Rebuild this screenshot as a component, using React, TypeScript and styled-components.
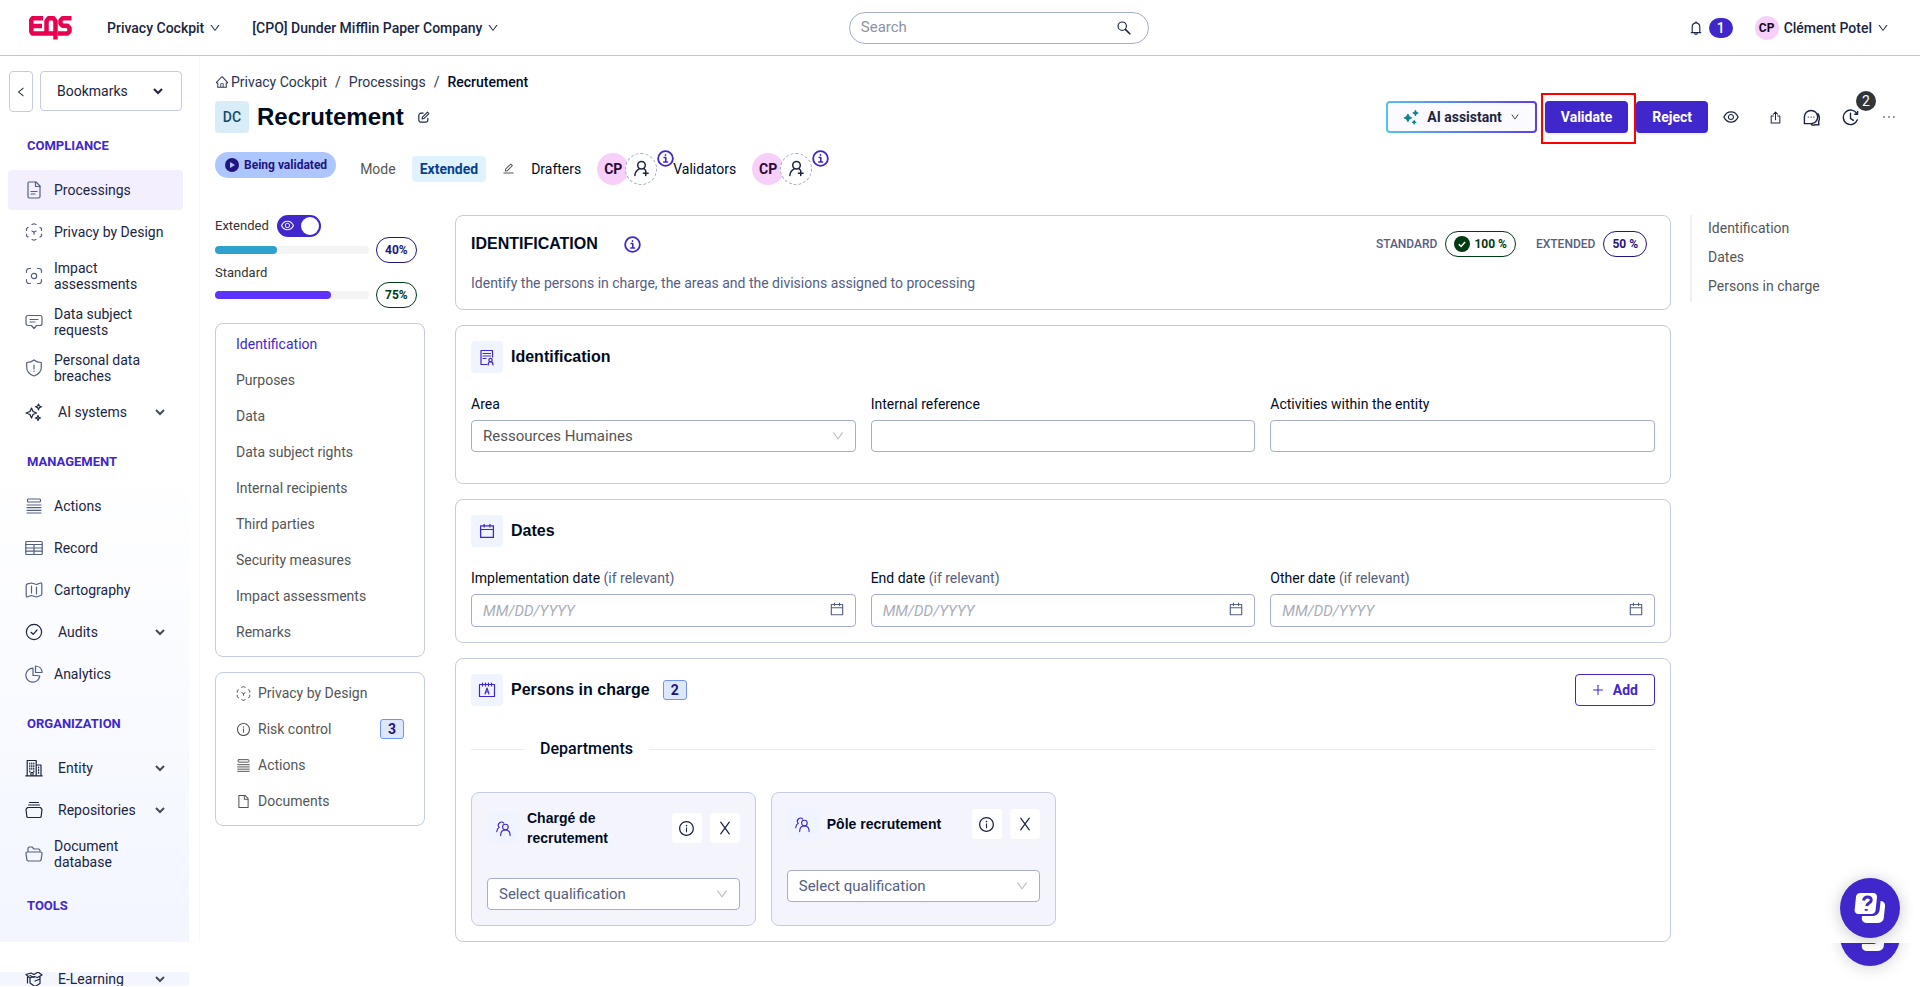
import React from "react";
import styled, { createGlobalStyle, css } from "styled-components";
import {
  AiOutlineBell,
  AiOutlineCalendar,
  AiOutlineDown,
  AiOutlineEdit,
  AiOutlineEllipsis,
  AiOutlineEye,
  AiOutlineFile,
  AiOutlineHome,
  AiOutlineInfoCircle,
  AiOutlineLeft,
  AiOutlinePlus,
} from "react-icons/ai";

const color = {
  primary: "#3f27cc",
  deep: "#22147e",
  ink: "#010b1f",
  navy: "#1b2540",
  slate: "#54607f",
  grey: "#555555",
  border: "#c5cbe0",
  field: "#a5afcd",
  tint: "#f0f4ff",
  green: "#013a13",
  pink: "#f6d0f9",
};
const headingFont = `"Liberation Sans", Arial, sans-serif`;

const GlobalStyle = createGlobalStyle`
  *, *::before, *::after { box-sizing: border-box; }
  body {
    margin: 0;
    background: #ffffff;
    color: ${color.ink};
    font: 400 14px/20px Roboto, "Liberation Sans", sans-serif;
  }
  h1, h2, h3, p, ul, ol { margin: 0; padding: 0; }
  ul, ol { list-style: none; }
  a { color: inherit; text-decoration: none; }
  button, input, select { font: inherit; color: inherit; margin: 0; }
  button { cursor: pointer; }
  svg { display: block; flex: none; }
`;

/* ---------- icons ---------- */

const Stroke = styled.svg.attrs({ viewBox: "0 0 18 18", "aria-hidden": true })<{ $size?: number }>`
  width: ${(p) => p.$size ?? 18}px;
  height: ${(p) => p.$size ?? 18}px;
  fill: none;
  stroke: currentColor;
  stroke-width: 1.2;
  stroke-linecap: round;
  stroke-linejoin: round;
`;

type IconProps = { $size?: number };

const FileIcon = (p: IconProps) => (
  <Stroke {...p}>
    <path d="M4 1h7l4 4v10.500a1.500 1.500 0 0 1-1.500 1.500h-9A1.500 1.500 0 0 1 3 15.500V2.200A1.200 1.200 0 0 1 4 1z" />
    <path d="M10.500 1v4.500H15M6 10.500h6M6 13h4" />
  </Stroke>
);
const DesignIcon = (p: IconProps) => (
  <Stroke {...p}>
    <path d="M7 1.500 9 .8l2 .7M3 4.500 1.500 5.500v2M15 4.500l1.500 1v2M1.500 11v2L3 14M16.500 11v2L15 14M7 16.500l2 .7 2-.7M7 8l2 1.200L11 8M9 9.200v2" />
  </Stroke>
);
const ScanIcon = (p: IconProps) => (
  <Stroke {...p}>
    <path d="M1.500 5.500V4A2.500 2.500 0 0 1 4 1.500h1.500M12.500 1.500H14A2.500 2.500 0 0 1 16.500 4v1.500M16.500 12.500V14a2.500 2.500 0 0 1-2.500 2.500h-1.500M5.500 16.500H4A2.500 2.500 0 0 1 1.500 14v-1.500" />
    <circle cx="9" cy="9" r="2.700" />
  </Stroke>
);
const RequestIcon = (p: IconProps) => (
  <Stroke {...p}>
    <path d="M3 2.500h12c1 0 2 .8 2 2v6c0 1.200-.8 2-2 2h-3.500L9 15.500l-2.500-3H3c-1.200 0-2-.8-2-2v-6c0-1.200 1-2 2-2zM5 6.500h8M5 9h5" />
  </Stroke>
);
const ShieldIcon = (p: IconProps) => (
  <Stroke {...p}>
    <path d="M9 1c2 1.800 4.500 2.500 7.300 2.500V8.500c0 4-3 7-7.300 8.500-4.300-1.500-7.300-4.500-7.300-8.500V3.500C4.500 3.500 7 2.800 9 1zM9 6v4M9 12v.3" />
  </Stroke>
);
const SparkIcon = (p: IconProps) => (
  <Stroke {...p}>
    <path d="M6.500 5 8 8.500l3.500 1.500L8 11.500 6.500 15 5 11.500 1 10l4-1.500zM13.500 1l.8 2 2.200.8-2.200.8-.8 2.200-.8-2.200-2.200-.8 2.200-.8zM13 12.500l.7 1.800 1.800.7-1.800.7L13 17.500l-.7-1.800-1.800-.7 1.800-.7z" />
  </Stroke>
);
const SparkFillIcon = (p: IconProps) => (
  <Stroke {...p}>
    <path
      fill="currentColor"
      d="M5.500 6 7 8.700 9.800 10 7 11.300 5.500 14 4 11.300 1.200 10 4 8.700zM14 1.800l.9 1.800 1.800.9-1.800.9L14 7.200l-.9-1.800-1.800-.9 1.800-.9zM12.500 13l.6 1.400 1.400.6-1.400.6-.6 1.400-.6-1.400-1.400-.6 1.400-.6z"
    />
  </Stroke>
);
const StackIcon = (p: IconProps) => (
  <Stroke {...p}>
    <rect x="2.500" y="2" width="13" height="3" rx="1" />
    <path d="M2 8h14M2 10.700h14M2 13.400h14M2 16h14" />
  </Stroke>
);
const TableIcon = (p: IconProps) => (
  <Stroke {...p}>
    <rect x=".8" y="2.500" width="16.400" height="13" rx="1" />
    <path d="M1 5.500h16M1 9h16M1 12.200h16M9 5.500v10" />
  </Stroke>
);
const MapIcon = (p: IconProps) => (
  <Stroke {...p}>
    <path d="M1.200 4.500c0-.8.5-1.300 1.300-1.600L6.500 2 11.500 3.500l4-1.500c.8-.2 1.300.2 1.300 1v10c0 .7-.4 1.200-1 1.500l-4.300 1.500-5-1.500-4 1.300c-.8.2-1.300-.2-1.300-1zM6.500 5v7M11.500 6v7" />
  </Stroke>
);
const CheckIcon = (p: IconProps) => (
  <Stroke {...p}>
    <circle cx="9" cy="9" r="7.600" />
    <path d="m6 9.300 2.200 2L12 7" />
  </Stroke>
);
const PieIcon = (p: IconProps) => (
  <Stroke {...p}>
    <path d="M8 3.200A7 7 0 1 0 14.800 11l-3.300-.5H8zM10.500 1v6.500H17C17 4 14.500 1.200 10.500 1z" />
  </Stroke>
);
const BuildingIcon = (p: IconProps) => (
  <Stroke {...p}>
    <path d="M.8 16.800h16.400M2.200 16.800V1.500h9v15.300M11.200 6H16v10.800M6 16.500v-3h2v3" />
    <path strokeDasharray="1 1.600" d="M4.800 4v9M6.800 4v7M8.800 4v9M13.600 8v7" />
  </Stroke>
);
const RepoIcon = (p: IconProps) => (
  <Stroke {...p}>
    <path d="M4.500 1.500h9M3.500 4h11M2.500 6.500h13L17 8.300l-.8 7c-.1.700-.6 1.200-1.400 1.200H3.200c-.8 0-1.300-.5-1.400-1.200l-.8-7z" />
  </Stroke>
);
const FolderIcon = (p: IconProps) => (
  <Stroke {...p}>
    <path d="M3 7V3.500C3 2.500 3.500 2 4.500 2H7l2 2h4.500c1 0 1.500.5 1.500 1.500V7M2.500 7h13c1 0 1.700.6 1.500 1.600l-.8 5.800c-.1 1-.8 1.600-1.700 1.600h-11c-.9 0-1.600-.6-1.700-1.600L1 8.600C.8 7.600 1.500 7 2.500 7z" />
  </Stroke>
);
const LearnIcon = (p: IconProps) => (
  <Stroke {...p}>
    <path d="M1 4.500 6 3l3 1.500L13 2l4 3-4.500 2.500L9 6.500 5 8zM2.500 7v6M5 8v5l5 3.500 5-3V6.500M10 11l5-2M5 5.500l4 2" />
  </Stroke>
);
const IdentityIcon = (p: IconProps) => (
  <Stroke {...p}>
    <path d="M9 16.500H3v-14h11.500V9M5 5.500h7.500M5 8h7.500M5 10.500h3" />
    <circle cx="12.500" cy="12" r="1.700" />
    <path d="M10.200 17c0-2 .8-3.300 2.300-3.300s2.500 1.300 2.500 3.300" />
  </Stroke>
);
const BadgeIcon = (p: IconProps) => (
  <Stroke {...p}>
    <path d="M1.500 3.500h15v12h-15zM4.500 2v3M7.500 2v3M10.500 2v3M13.500 2v3M7 13l2-6 2 6M7.700 11h2.600" />
  </Stroke>
);
const PeopleIcon = (p: IconProps) => (
  <Stroke {...p}>
    <circle cx="11" cy="7.500" r="3" />
    <path d="M6 16.500c0-3.500 2-6 5-6s5 2.500 5 6M4.500 7.800a2.800 2.800 0 1 1 4.800-4.500M1.800 12.500c.2-2.300 1-3.800 2.700-4.700" />
  </Stroke>
);
const AddUserIcon = (p: IconProps) => (
  <Stroke {...p}>
    <g strokeWidth="1.600">
      <circle cx="9" cy="5.500" r="4" />
      <path d="M2 16.500c0-3 1.500-5.500 4.500-7.200M11.500 9l1.500 1.500M13.500 11.500v5M11 14h5" />
    </g>
  </Stroke>
);
const InfoIcon = (p: IconProps) => (
  <Stroke {...p}>
    <circle cx="9" cy="9" r="7.800" strokeWidth="1.900" />
    <path d="M7.500 8h1.800v4.500M7.200 12.700h4M9 5.200v.3" strokeWidth="1.700" />
  </Stroke>
);
const SearchIcon = (p: IconProps) => (
  <Stroke {...p}>
    <circle cx="7" cy="7" r="4.700" strokeWidth="1.300" />
    <path d="m10.500 10.500 5 5" strokeWidth="1.800" />
  </Stroke>
);
const PenIcon = (p: IconProps) => (
  <Stroke {...p}>
    <path d="M8.500 3H5.500a3 3 0 0 0-3 3v6.500a3 3 0 0 0 3 3H12a3 3 0 0 0 3-3V10" strokeWidth="1.600" />
    <path d="m7 11 .5-2.500 7-7 2 2-7 7z" strokeWidth="1.400" />
  </Stroke>
);
const ShareIcon = (p: IconProps) => (
  <Stroke {...p}>
    <path d="M6 7H3v9.500h12V7h-3M9 12V1.500M6 4.500l3-3 3 3" strokeWidth="1.400" />
  </Stroke>
);
const ChatIcon = (p: IconProps) => (
  <Stroke {...p}>
    <path d="M1.500 15.500V8.500a7 7 0 1 1 7 7zM15.800 5c2 3 1.600 6.500.7 8.500l.3 3.300-3.300-.3c-1.500.7-3 .7-4.500.2" strokeWidth="1.500" />
    <path d="M5.500 8.500h.1M8.500 8.500h.1M11.500 8.500h.1" strokeWidth="1.300" />
  </Stroke>
);
const ClockIcon = (p: IconProps) => (
  <Stroke {...p}>
    <path d="M15.800 5A7.700 7.700 0 1 0 16.300 11.500M16.500 2.500V5.500h-3M9 4.500V10l3 2" strokeWidth="1.500" />
  </Stroke>
);
const CrossIcon = (p: IconProps) => (
  <Stroke {...p}>
    <path d="m3.500 1.500 11 15M14.500 1.500l-11 15" strokeWidth="1.600" />
  </Stroke>
);
const PlayBadge = () => (
  <svg width="14" height="14" viewBox="0 0 14 14" aria-hidden="true">
    <circle cx="7" cy="7" r="7" fill={color.deep} />
    <path d="M5 4l5 3-5 3z" fill="#adc6ff" />
  </svg>
);
const DoneBadge = () => (
  <svg width="16" height="16" viewBox="0 0 16 16" aria-hidden="true">
    <circle cx="8" cy="8" r="8" fill={color.green} />
    <path d="m4.800 8.300 2.300 2.200 4-4.500" fill="none" stroke="#fff" strokeWidth="1.500" />
  </svg>
);
const Chevron = () => (
  <svg width="12" height="12" viewBox="0 0 12 12" aria-hidden="true">
    <path d="M2 4l4 4 4-4" fill="none" stroke="currentColor" strokeWidth="2" />
  </svg>
);
const Logo = () => (
  <svg width="43" height="24" viewBox="0 0 43 24" role="img" aria-label="EQS">
    <g fill="none" stroke="#ea0050" strokeWidth="4.500" strokeLinejoin="round">
      <polyline points="14,2.300 3.500,2.300 2.300,4 2.300,15.500 3.500,17.500 27,17.500" />
      <polyline points="2.300,10 13,10" />
      <polyline points="17.500,18 17.500,5 19.500,2.300 24.500,2.300 26.500,5 26.500,23.500" />
      <polyline points="42.500,2.300 33.500,2.300 31.500,4.500 31.500,7.500 33.500,9.800 38.500,9.800 40.500,12 40.500,15.500 38.500,17.500 29,17.500" />
    </g>
  </svg>
);
const HelpGlyph = () => (
  <svg width="60" height="60" viewBox="0 0 60 60" aria-hidden="true">
    <rect x="22" y="23" width="22" height="22" rx="5" fill="#fff" transform="skewX(-6) translate(4 0)" />
    <rect x="14" y="13" width="26" height="25" rx="6" fill={color.primary} transform="skewX(-6) translate(3 0)" />
    <rect x="15" y="15" width="21" height="21" rx="4" fill="#fff" transform="skewX(-6) translate(3 0)" />
    <path
      d="M23.500 22.500c.5-2.500 2-3.500 4-3.500 2.500 0 4 1.400 3.700 3.500-.4 2.600-4 2.500-4.500 5.500M26.200 31v1.800"
      fill="none"
      stroke={color.primary}
      strokeWidth="3"
    />
  </svg>
);

/* ---------- page frame ---------- */

const Page = styled.div`
  display: flex;
  flex-direction: column;
  min-height: 100vh;
`;
const TopBar = styled.header`
  display: grid;
  grid-template-columns: 10fr 300px 9fr;
  column-gap: 24px;
  align-items: center;
  height: 56px;
  padding: 0 31px 0 29px;
  border-bottom: 1px solid #bcc6d6;
  color: ${color.navy};
  font-weight: 500;
`;
const TopGroup = styled.div<{ $end?: boolean }>`
  display: flex;
  align-items: center;
  gap: ${(p) => (p.$end ? 22 : 31)}px;
  justify-content: ${(p) => (p.$end ? "flex-end" : "flex-start")};
`;
const HomeLink = styled.a`
  margin-right: 4px;
`;
const PlainButton = styled.button`
  display: flex;
  align-items: center;
  gap: 5px;
  padding: 0;
  border: 0;
  background: none;
  white-space: nowrap;
`;
const SearchBox = styled.label`
  display: flex;
  align-items: center;
  height: 32px;
  padding: 0 16px 0 11px;
  border: 1px solid ${color.field};
  border-radius: 16px;
`;
const SearchInput = styled.input`
  flex: 1;
  min-width: 0;
  padding: 0 0 2px;
  border: 0;
  outline: 0;
  background: none;
  font-size: 15px;
  font-weight: 400;
  &::placeholder { color: #8d93a3; opacity: 1; }
`;
const Bubble = styled.span`
  padding: 0 8px;
  border-radius: 10px;
  background: ${color.primary};
  color: #fff;
`;
const SmallAvatar = styled.span`
  display: grid;
  place-items: center;
  width: 24px;
  height: 24px;
  border-radius: 50%;
  background: ${color.pink};
  color: #17071f;
  font-size: 12px;
  font-weight: 700;
`;

const Body = styled.div`
  display: flex;
  align-items: stretch;
`;

/* ---------- sidebar ---------- */

const Sidebar = styled.aside`
  flex: none;
  width: 200px;
  padding: 15px 10px 0 0;
  border-right: 1px solid #f6f8fe;
  background: linear-gradient(#ffffff 45%, #f3f6ff 98%) content-box no-repeat;
  color: ${color.navy};
`;
const SideTools = styled.div`
  display: flex;
  align-items: flex-start;
  gap: 7px;
  margin-bottom: 4px;
  padding: 0 7px 0 9px;
`;
const CollapseButton = styled.button`
  display: grid;
  place-items: center;
  width: 24px;
  height: 41px;
  padding: 0;
  border: 1px solid ${color.border};
  border-radius: 4px;
  background: #fff;
`;
const BookmarksButton = styled.button`
  display: flex;
  flex: 1;
  align-items: center;
  justify-content: space-between;
  height: 40px;
  padding: 0 17px 0 16px;
  border: 1px solid ${color.border};
  border-radius: 4px;
  background: #fff;
`;
const SideHeading = styled.h2`
  height: 54px;
  padding: 20px 0 0 27px;
  color: ${color.primary};
  font-size: 13px;
  font-weight: 700;
  line-height: 20px;
`;
const SideList = styled.ul`
  display: flex;
  flex-direction: column;
  gap: 2px;
  padding: 0 6px 0 8px;
`;
const sideItem = css`
  display: flex;
  align-items: center;
  width: 100%;
  min-height: 40px;
  padding: 6px 12px 6px 17px;
  border: 0;
  border-radius: 4px;
  background: none;
  text-align: left;
  line-height: 16px;
`;
const SideLink = styled.a<{ $active?: boolean }>`
  ${sideItem}
  gap: 11px;
  background: ${(p) => (p.$active ? "#f3efff" : "none")};
  > svg { color: ${color.slate}; }
`;
const SideToggle = styled.button`
  ${sideItem}
  gap: 15px;
  padding-right: 17px;
  > span { flex: 1; }
  > svg:last-child { color: #444b5c; }
`;
const FootStrip = styled.div`
  display: flex;
  align-items: center;
  width: 189px;
  height: 14px;
  margin-top: 30px;
  padding: 0 6px 0 8px;
  overflow: hidden;
  background: #f3f6ff;
  color: ${color.navy};
`;

/* ---------- page heading ---------- */

const Main = styled.main`
  flex: 1;
  min-width: 0;
  padding: 16px 0 0 15px;
`;
const Crumbs = styled.ol`
  display: flex;
  gap: 8px;
  color: #2a3350;
  li { display: flex; align-items: center; gap: 2px; }
  li:last-child { color: ${color.ink}; font-weight: 500; }
`;
const TitleRow = styled.div`
  display: flex;
  align-items: center;
  justify-content: space-between;
  height: 32px;
  margin-top: 9px;
  padding-right: 17px;
`;
const TitleGroup = styled.div`
  display: flex;
  align-items: center;
  gap: 8px;
`;
const CodeTag = styled.span`
  display: grid;
  place-items: center;
  width: 34px;
  height: 32px;
  border-radius: 4px;
  background: #d8edf7;
  color: #164c66;
  font-weight: 500;
`;
const Title = styled.h1`
  font: 700 24px/32px ${headingFont};
`;
const IconButton = styled.button<{ $width: number }>`
  position: relative;
  display: grid;
  place-items: center;
  width: ${(p) => p.$width}px;
  height: 32px;
  padding: 0;
  border: 0;
  background: none;
  color: ${color.navy};
`;
const Actions = styled.div`
  display: flex;
  align-items: center;
  gap: 8px;
`;
const AssistantButton = styled.button`
  display: flex;
  align-items: center;
  gap: 8px;
  height: 32px;
  padding: 0 15px;
  border: 2px solid transparent;
  border-radius: 4px;
  background:
    linear-gradient(#fbfbff, #fbfbff) padding-box,
    linear-gradient(90deg, #58c3e4, #5b3bf7) border-box;
  color: ${color.navy};
  font-weight: 700;
  > svg:first-child { color: #0f7f95; }
`;
const SolidButton = styled.button`
  height: 32px;
  padding: 0 16px;
  border: 0;
  border-radius: 4px;
  background: ${color.primary};
  box-shadow: 0 2px 0 rgba(40, 30, 120, 0.06);
  color: #fff;
  font-weight: 700;
  line-height: 30px;
`;
const Highlight = styled.span`
  position: relative;
  &::after {
    content: "";
    position: absolute;
    inset: -8px -8px -11px -4px;
    border: 2px solid #ff0000;
    pointer-events: none;
  }
`;
const Tools = styled.div`
  display: flex;
  align-items: center;
  margin-left: -7px;
`;
const CountDot = styled.span`
  position: absolute;
  top: -10px;
  left: 31px;
  width: 20px;
  height: 20px;
  border-radius: 50%;
  background: #333638;
  color: #fff;
`;

const MetaRow = styled.div`
  display: flex;
  align-items: flex-start;
  gap: 24px;
  margin-top: 19px;
`;
const StatusTag = styled.span`
  display: flex;
  align-items: center;
  gap: 5px;
  height: 26px;
  padding: 0 9px 0 10px;
  border-radius: 13px;
  background: #adc6ff;
  color: ${color.deep};
  font-size: 12px;
  font-weight: 700;
`;
const MetaGroup = styled.div`
  display: flex;
  align-items: center;
  gap: 16px;
  height: 33px;
`;
const Muted = styled.span`
  color: ${color.grey};
`;
const ModeTag = styled.span`
  height: 26px;
  padding: 0 8px;
  border-radius: 4px;
  background: #dff3ff;
  color: #0b3f92;
  font-weight: 700;
  line-height: 26px;
`;
const People = styled.div`
  position: relative;
  display: flex;
`;
const Avatar = styled.span`
  display: grid;
  place-items: center;
  width: 32px;
  height: 32px;
  border-radius: 50%;
  background: ${color.pink};
  color: #2b0a35;
  font-weight: 700;
`;
const AddPerson = styled.button`
  display: grid;
  place-items: center;
  width: 32px;
  height: 32px;
  margin-left: -4px;
  padding: 0;
  border: 1px dashed ${color.field};
  border-radius: 50%;
  background: #fff;
  color: ${color.navy};
`;
const CornerInfo = styled.span`
  position: absolute;
  top: -3px;
  right: -17px;
  color: ${color.primary};
`;

/* ---------- columns ---------- */

const Columns = styled.div`
  display: grid;
  grid-template-columns: 210px minmax(0, 1fr) 230px;
  align-items: start;
  margin-top: 30px;
`;
const LeftColumn = styled.div`
  color: #333;
`;
const ToggleLabel = styled.label`
  display: flex;
  align-items: center;
  gap: 8px;
  height: 22px;
  font-size: 13px;
`;
const Switch = styled.span`
  position: relative;
  display: flex;
  align-items: center;
  width: 44px;
  height: 22px;
  padding: 0 0 2px 3px;
  border-radius: 11px;
  background: ${color.primary};
  color: #fff;
  &::after {
    content: "";
    position: absolute;
    top: 2px;
    right: 2px;
    width: 18px;
    height: 18px;
    border-radius: 50%;
    background: #fff;
  }
  input { position: absolute; inset: 0; width: 100%; height: 100%; margin: 0; opacity: 0; }
`;
const Progress = styled.div`
  display: flex;
  align-items: center;
  gap: 7px;
  height: 26px;
`;
const Track = styled.div`
  width: 154px;
  height: 8px;
  border-radius: 4px;
  background: #f4f4f4;
`;
const Fill = styled.div<{ $value: number; $color: string }>`
  width: ${(p) => p.$value}%;
  height: 8px;
  border-radius: 4px;
  background: ${(p) => p.$color};
`;
const ProgressLabel = styled.div`
  height: 19px;
  font-size: 13px;
  line-height: 19px;
`;
const Pill = styled.span<{ $green?: boolean }>`
  display: flex;
  align-items: center;
  gap: 4px;
  height: 26px;
  padding: 0 8px;
  border: 1px solid ${(p) => (p.$green ? color.green : color.deep)};
  border-radius: 13px;
  color: ${(p) => (p.$green ? color.green : color.deep)};
  font-size: 12px;
  font-weight: 700;
`;
const NavCard = styled.nav`
  margin-top: 15px;
  padding: 2px 20px 6px;
  border: 1px solid ${color.border};
  border-radius: 8px;
  color: ${color.grey};
`;
const NavLink = styled.a<{ $active?: boolean }>`
  display: flex;
  align-items: center;
  gap: 7px;
  height: 36px;
  color: ${(p) => (p.$active ? color.primary : color.grey)};
`;
const CountTag = styled.span`
  width: 24px;
  height: 20px;
  margin-left: 5px;
  border: 1px solid #6f93f5;
  border-radius: 3px;
  background: #dde8fd;
  color: ${color.deep};
  font-weight: 700;
  line-height: 18px;
  text-align: center;
`;
const PushRight = styled.span`
  flex: 1;
`;

const Content = styled.div`
  display: flex;
  flex-direction: column;
  gap: 15px;
  margin: 0 19px 0 30px;
`;
const Card = styled.section<{ $roomy?: boolean }>`
  padding: 15px 15px ${(p) => (p.$roomy ? 31 : 15)}px;
  border: 1px solid ${color.border};
  border-radius: 8px;
`;
const CardHead = styled.div`
  display: flex;
  align-items: center;
  gap: 8px;
  height: 32px;
`;
const IntroHead = styled(CardHead)`
  height: 26px;
  padding-right: 8px;
`;
const CardTitle = styled.h2`
  font: 700 16px/24px ${headingFont};
`;
const InfoMark = styled.span`
  margin-left: 18px;
  color: ${color.primary};
`;
const Level = styled.span`
  margin-left: 12px;
  color: ${color.slate};
  font-size: 12px;
  font-weight: 500;
`;
const Intro = styled.p`
  margin: 16px 0 1px;
  color: ${color.slate};
`;
const IconTile = styled.span`
  display: grid;
  place-items: center;
  flex: none;
  width: 32px;
  height: 32px;
  border-radius: 4px;
  background: ${color.tint};
  color: ${color.primary};
`;
const Fields = styled.div`
  display: grid;
  grid-template-columns: repeat(3, minmax(0, 1fr));
  gap: 15px;
  margin-top: 21px;
`;
const FieldLabel = styled.label`
  display: block;
  margin-bottom: 6px;
  span { color: ${color.slate}; }
`;
const FieldBox = styled.div<{ $muted?: boolean }>`
  position: relative;
  > svg {
    position: absolute;
    top: ${(p) => (p.$muted ? 9 : 7)}px;
    right: 11px;
    color: ${(p) => (p.$muted ? "#b9bcc4" : color.slate)};
    pointer-events: none;
  }
`;
const control = css`
  display: block;
  width: 100%;
  height: 32px;
  padding: 0 11px;
  border: 1px solid ${color.field};
  border-radius: 4px;
  outline: 0;
  background: #fff;
`;
const TextInput = styled.input`
  ${control}
`;
const DateInput = styled.input`
  ${control}
  height: 33px;
  font-size: 15px;
  &::placeholder { color: #a9adb9; font-style: italic; opacity: 1; }
`;
const SelectInput = styled.select<{ $placeholder?: boolean }>`
  ${control}
  appearance: none;
  color: ${(p) => (p.$placeholder ? color.slate : color.grey)};
  font-size: 15px;
`;
const AddButton = styled.button`
  display: flex;
  align-items: center;
  gap: 8px;
  height: 32px;
  padding: 0 16px 0 15px;
  border: 1px solid ${color.primary};
  border-radius: 4px;
  background: #fff;
  color: ${color.primary};
  font-weight: 700;
`;
const Divider = styled.h3`
  display: flex;
  align-items: center;
  gap: 16px;
  margin: 31px 0;
  font-size: 16px;
  font-weight: 500;
  line-height: 24px;
  &::before, &::after { content: ""; height: 1px; background: #ececee; }
  &::before { width: 53px; }
  &::after { flex: 1; }
`;
const Departments = styled.div`
  display: grid;
  grid-template-columns: repeat(4, minmax(0, 1fr));
  gap: 15px;
`;
const DeptCard = styled.article`
  padding: 15px;
  border: 1px solid ${color.border};
  border-radius: 8px;
  background: #f4f5fc;
`;
const DeptHead = styled.div`
  display: flex;
  align-items: center;
  gap: 8px;
  margin-bottom: 30px;
`;
const DeptTitle = styled.h4`
  flex: 1;
  margin: 0;
  font: 700 14px/20px ${headingFont};
`;
const TileButton = styled.button`
  display: grid;
  place-items: center;
  flex: none;
  width: 30px;
  height: 30px;
  padding: 0;
  border: 0;
  border-radius: 4px;
  background: #fff;
  color: ${color.navy};
`;
const Anchors = styled.nav`
  display: flex;
  flex-direction: column;
  padding-left: 16px;
  border-left: 2px solid #f0f0f0;
  color: ${color.grey};
  a { height: 29px; line-height: 27px; }
`;

/* ---------- help bubble ---------- */

const HelpButton = styled.button`
  position: fixed;
  right: 20px;
  bottom: 49px;
  width: 60px;
  height: 60px;
  padding: 0;
  border: 0;
  border-radius: 50%;
  background: ${color.primary};
  box-shadow: 0 2px 16px rgba(0, 0, 0, 0.22);
`;
const HelpTail = styled.div`
  position: fixed;
  right: 0;
  bottom: 0;
  display: flex;
  align-items: flex-end;
  width: 96px;
  height: 44px;
  padding: 0 20px 21px 16px;
  overflow: hidden;
`;
const HelpDisc = styled.span`
  width: 60px;
  height: 60px;
  border-radius: 50%;
  background: ${color.primary};
  box-shadow: 0 2px 16px rgba(0, 0, 0, 0.16);
`;

/* ---------- data ---------- */

type SideEntry = { label: string; icon: React.FC<IconProps>; toggle?: boolean; active?: boolean };
const sections: { title: string; items: SideEntry[] }[] = [
  {
    title: "COMPLIANCE",
    items: [
      { label: "Processings", icon: FileIcon, active: true },
      { label: "Privacy by Design", icon: DesignIcon },
      { label: "Impact assessments", icon: ScanIcon },
      { label: "Data subject requests", icon: RequestIcon },
      { label: "Personal data breaches", icon: ShieldIcon },
      { label: "AI systems", icon: SparkIcon, toggle: true },
    ],
  },
  {
    title: "MANAGEMENT",
    items: [
      { label: "Actions", icon: StackIcon },
      { label: "Record", icon: TableIcon },
      { label: "Cartography", icon: MapIcon },
      { label: "Audits", icon: CheckIcon, toggle: true },
      { label: "Analytics", icon: PieIcon },
    ],
  },
  {
    title: "ORGANIZATION",
    items: [
      { label: "Entity", icon: BuildingIcon, toggle: true },
      { label: "Repositories", icon: RepoIcon, toggle: true },
      { label: "Document database", icon: FolderIcon },
    ],
  },
  { title: "TOOLS", items: [] },
];
const steps = [
  "Identification",
  "Purposes",
  "Data",
  "Data subject rights",
  "Internal recipients",
  "Third parties",
  "Security measures",
  "Impact assessments",
  "Remarks",
];

const SideRow = ({ label, icon: Icon, toggle, active }: SideEntry) =>
  toggle ? (
    <SideToggle type="button">
      <Icon />
      <span>{label}</span>
      <Chevron />
    </SideToggle>
  ) : (
    <SideLink href="#" $active={active}>
      <Icon />
      {label}
    </SideLink>
  );

const Assigned = ({ label }: { label: string }) => (
  <>
    <span>{label}</span>
    <People>
      <Avatar>CP</Avatar>
      <AddPerson type="button" aria-label={`Add to ${label}`}>
        <AddUserIcon $size={17} />
      </AddPerson>
      <CornerInfo>
        <InfoIcon $size={17} />
      </CornerInfo>
    </People>
  </>
);

const DateField = ({ id, label }: { id: string; label: string }) => (
  <div>
    <FieldLabel htmlFor={id}>
      {label} <span>(if relevant)</span>
    </FieldLabel>
    <FieldBox>
      <DateInput id={id} placeholder="MM/DD/YYYY" />
      <AiOutlineCalendar size={16} />
    </FieldBox>
  </div>
);

const Department = ({ name }: { name: string }) => (
  <DeptCard>
    <DeptHead>
      <IconTile>
        <PeopleIcon $size={17} />
      </IconTile>
      <DeptTitle>{name}</DeptTitle>
      <TileButton type="button" aria-label={`About ${name}`}>
        <AiOutlineInfoCircle size={17} />
      </TileButton>
      <TileButton type="button" aria-label={`Remove ${name}`}>
        <CrossIcon $size={14} />
      </TileButton>
    </DeptHead>
    <FieldBox $muted>
      <SelectInput $placeholder aria-label={`Qualification for ${name}`}>
        <option>Select qualification</option>
      </SelectInput>
      <AiOutlineDown size={14} />
    </FieldBox>
  </DeptCard>
);

export default function App() {
  return (
    <Page>
      <GlobalStyle />
      <TopBar>
        <TopGroup>
          <HomeLink href="#">
            <Logo />
          </HomeLink>
          <PlainButton type="button">
            Privacy Cockpit <AiOutlineDown size={12} />
          </PlainButton>
          <PlainButton type="button">
            [CPO] Dunder Mifflin Paper Company <AiOutlineDown size={12} />
          </PlainButton>
        </TopGroup>
        <SearchBox>
          <SearchInput type="text" placeholder="Search" aria-label="Search" />
          <SearchIcon $size={16} />
        </SearchBox>
        <TopGroup $end>
          <PlainButton type="button" aria-label="Notifications">
            <AiOutlineBell size={16} />
            <Bubble>1</Bubble>
          </PlainButton>
          <PlainButton type="button">
            <SmallAvatar>CP</SmallAvatar>
            Clément Potel <AiOutlineDown size={12} />
          </PlainButton>
        </TopGroup>
      </TopBar>

      <Body>
        <Sidebar>
          <SideTools>
            <CollapseButton type="button" aria-label="Collapse menu">
              <AiOutlineLeft size={12} />
            </CollapseButton>
            <BookmarksButton type="button">
              Bookmarks
              <Chevron />
            </BookmarksButton>
          </SideTools>
          {sections.map((s) => (
            <React.Fragment key={s.title}>
              <SideHeading>{s.title}</SideHeading>
              <SideList>
                {s.items.map((item) => (
                  <li key={item.label}>
                    <SideRow {...item} />
                  </li>
                ))}
              </SideList>
            </React.Fragment>
          ))}
        </Sidebar>

        <Main>
          <nav aria-label="Breadcrumb">
            <Crumbs>
              <li>
                <AiOutlineHome size={14} />
                <a href="#">Privacy Cockpit</a>
              </li>
              <li>/</li>
              <li>
                <a href="#">Processings</a>
              </li>
              <li>/</li>
              <li>Recrutement</li>
            </Crumbs>
          </nav>

          <TitleRow>
            <TitleGroup>
              <CodeTag>DC</CodeTag>
              <Title>Recrutement</Title>
              <IconButton type="button" $width={24} aria-label="Rename">
                <PenIcon $size={13} />
              </IconButton>
            </TitleGroup>
            <Actions>
              <AssistantButton type="button">
                <SparkFillIcon $size={16} />
                AI assistant
                <AiOutlineDown size={10} />
              </AssistantButton>
              <Highlight>
                <SolidButton type="button">Validate</SolidButton>
              </Highlight>
              <SolidButton type="button">Reject</SolidButton>
              <Tools>
                <IconButton type="button" $width={44} aria-label="Preview">
                  <AiOutlineEye size={18} />
                </IconButton>
                <IconButton type="button" $width={44} aria-label="Share">
                  <ShareIcon $size={13} />
                </IconButton>
                <IconButton type="button" $width={28} aria-label="Comments">
                  <ChatIcon $size={17} />
                </IconButton>
                <IconButton type="button" $width={50} aria-label="History">
                  <ClockIcon $size={17} />
                  <CountDot>2</CountDot>
                </IconButton>
                <IconButton type="button" $width={28} aria-label="More">
                  <AiOutlineEllipsis size={18} color="#7b8092" />
                </IconButton>
              </Tools>
            </Actions>
          </TitleRow>

          <MetaRow>
            <StatusTag>
              <PlayBadge />
              Being validated
            </StatusTag>
            <MetaGroup>
              <Muted>Mode</Muted>
              <ModeTag>Extended</ModeTag>
              <PlainButton type="button" aria-label="Change mode">
                <AiOutlineEdit size={13} color={color.grey} />
              </PlainButton>
              <Assigned label="Drafters" />
              <Assigned label="Validators" />
            </MetaGroup>
          </MetaRow>

          <Columns>
            <LeftColumn>
              <ToggleLabel>
                Extended
                <Switch>
                  <input type="checkbox" role="switch" defaultChecked />
                  <AiOutlineEye size={15} />
                </Switch>
              </ToggleLabel>
              <Progress>
                <Track>
                  <Fill $value={40} $color="#2fa1cd" />
                </Track>
                <Pill>40%</Pill>
              </Progress>
              <ProgressLabel>Standard</ProgressLabel>
              <Progress>
                <Track>
                  <Fill $value={75} $color="#5c33ff" />
                </Track>
                <Pill $green>75%</Pill>
              </Progress>

              <NavCard aria-label="Sections">
                {steps.map((s, i) => (
                  <NavLink key={s} href="#" $active={i === 0}>
                    {s}
                  </NavLink>
                ))}
              </NavCard>
              <NavCard aria-label="Related">
                <NavLink href="#">
                  <DesignIcon $size={15} />
                  Privacy by Design
                </NavLink>
                <NavLink href="#">
                  <AiOutlineInfoCircle size={15} />
                  Risk control
                  <PushRight />
                  <CountTag>3</CountTag>
                </NavLink>
                <NavLink href="#">
                  <StackIcon $size={15} />
                  Actions
                </NavLink>
                <NavLink href="#">
                  <AiOutlineFile size={15} />
                  Documents
                </NavLink>
              </NavCard>
            </LeftColumn>

            <Content>
              <Card>
                <IntroHead>
                  <CardTitle>IDENTIFICATION</CardTitle>
                  <InfoMark>
                    <InfoIcon $size={17} />
                  </InfoMark>
                  <PushRight />
                  <Level>STANDARD</Level>
                  <Pill $green>
                    <DoneBadge />
                    100 %
                  </Pill>
                  <Level>EXTENDED</Level>
                  <Pill>50 %</Pill>
                </IntroHead>
                <Intro>Identify the persons in charge, the areas and the divisions assigned to processing</Intro>
              </Card>

              <Card $roomy>
                <CardHead>
                  <IconTile>
                    <IdentityIcon />
                  </IconTile>
                  <CardTitle>Identification</CardTitle>
                </CardHead>
                <Fields>
                  <div>
                    <FieldLabel htmlFor="area">Area</FieldLabel>
                    <FieldBox $muted>
                      <SelectInput id="area">
                        <option>Ressources Humaines</option>
                      </SelectInput>
                      <AiOutlineDown size={14} />
                    </FieldBox>
                  </div>
                  <div>
                    <FieldLabel htmlFor="reference">Internal reference</FieldLabel>
                    <TextInput id="reference" />
                  </div>
                  <div>
                    <FieldLabel htmlFor="activities">Activities within the entity</FieldLabel>
                    <TextInput id="activities" />
                  </div>
                </Fields>
              </Card>

              <Card>
                <CardHead>
                  <IconTile>
                    <AiOutlineCalendar size={18} />
                  </IconTile>
                  <CardTitle>Dates</CardTitle>
                </CardHead>
                <Fields>
                  <DateField id="implementation" label="Implementation date" />
                  <DateField id="end" label="End date" />
                  <DateField id="other" label="Other date" />
                </Fields>
              </Card>

              <Card>
                <CardHead>
                  <IconTile>
                    <BadgeIcon />
                  </IconTile>
                  <CardTitle>Persons in charge</CardTitle>
                  <CountTag>2</CountTag>
                  <PushRight />
                  <AddButton type="button">
                    <AiOutlinePlus size={14} />
                    Add
                  </AddButton>
                </CardHead>
                <Divider>Departments</Divider>
                <Departments>
                  <Department name="Chargé de recrutement" />
                  <Department name="Pôle recrutement" />
                </Departments>
              </Card>
            </Content>

            <Anchors aria-label="On this page">
              <a href="#">Identification</a>
              <a href="#">Dates</a>
              <a href="#">Persons in charge</a>
            </Anchors>
          </Columns>
        </Main>
      </Body>

      <FootStrip>
        <SideToggle type="button">
          <LearnIcon />
          <span>E-Learning</span>
          <Chevron />
        </SideToggle>
      </FootStrip>

      <HelpTail>
        <HelpDisc>
          <HelpGlyph />
        </HelpDisc>
      </HelpTail>
      <HelpButton type="button" aria-label="Help">
        <HelpGlyph />
      </HelpButton>
    </Page>
  );
}
